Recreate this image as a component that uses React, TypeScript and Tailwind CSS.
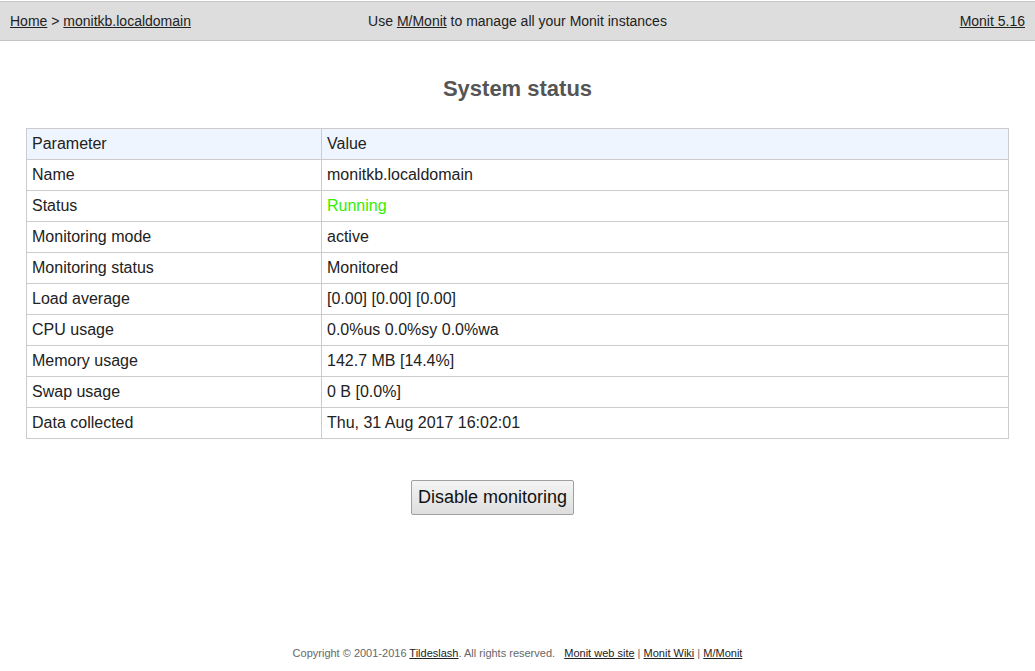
const ROWS: [string, string][] = [
  ['Name', 'monitkb.localdomain'],
  ['Status', 'Running'],
  ['Monitoring mode', 'active'],
  ['Monitoring status', 'Monitored'],
  ['Load average', '[0.00] [0.00] [0.00]'],
  ['CPU usage', '0.0%us 0.0%sy 0.0%wa'],
  ['Memory usage', '142.7 MB [14.4%]'],
  ['Swap usage', '0 B [0.0%]'],
  ['Data collected', 'Thu, 31 Aug 2017 16:02:01'],
];

export default function App() {
  return (
    <div className="min-h-[671px] flex flex-col bg-white text-[#222] font-['Liberation_Sans',Arial,sans-serif]">
      {/* Header */}
      <div className="mt-px h-10 grid grid-cols-[1fr_auto_1fr] items-center px-[10px] bg-[#dddddd] border-t border-b border-[#c4c4c4] text-[14px]">
        <div>
          <a className="underline">Home</a> &gt; <a className="underline">monitkb.localdomain</a>
        </div>
        <div>
          Use <a className="underline">M/Monit</a> to manage all your Monit instances
        </div>
        <div className="text-right">
          <a className="underline">Monit 5.16</a>
        </div>
      </div>

      <h1 className="mt-[34px] text-center text-[22px] font-bold text-[#555] leading-[28px]">System status</h1>

      {/* Table */}
      <div className="mt-[25px] px-[26px]">
        <table className="w-[983px] border-collapse text-[16px] text-[#222]">
          <tbody>
            <tr className="bg-[#eef5fe] h-[31px]">
              <td className="w-[295px] border border-[#cccccc] px-[5px]">Parameter</td>
              <td className="border border-[#cccccc] px-[5px]">Value</td>
            </tr>
            {ROWS.map(([k, v]) => (
              <tr key={k} className="h-[31px]">
                <td className="border border-[#cccccc] px-[5px]">{k}</td>
                <td className={`border border-[#cccccc] px-[5px] ${k === 'Status' ? 'text-[#33ee00]' : ''}`}>{v}</td>
              </tr>
            ))}
          </tbody>
        </table>
      </div>

      <div className="mt-[41px] flex justify-center pr-[50px]">
        <button className="h-[35px] px-[6px] text-[18px] text-[#111] border border-[#a0a0a0] rounded-[2px] bg-gradient-to-b from-[#f4f4f4] to-[#dedede]">
          Disable monitoring
        </button>
      </div>

      <div className="flex-1" />

      <div className="pb-[10px] text-center text-[11px] text-[#666]">
        Copyright © 2001-2016 <a className="underline text-[#222]">Tildeslash</a>. All rights reserved.&nbsp;&nbsp;&nbsp;
        <a className="underline text-[#222]">Monit web site</a> | <a className="underline text-[#222]">Monit Wiki</a> |{' '}
        <a className="underline text-[#222]">M/Monit</a>
      </div>
    </div>
  );
}
